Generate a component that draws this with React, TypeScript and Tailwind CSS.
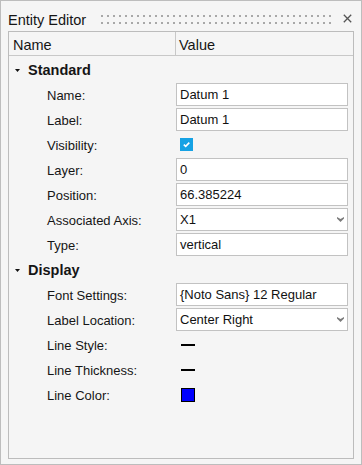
import React from "react";

type Row =
  | { kind: "section"; label: string }
  | { kind: "text"; label: string; value: string }
  | { kind: "select"; label: string; value: string }
  | { kind: "check"; label: string }
  | { kind: "line"; label: string }
  | { kind: "color"; label: string; color: string };

const ROWS: Row[] = [
  { kind: "section", label: "Standard" },
  { kind: "text", label: "Name:", value: "Datum 1" },
  { kind: "text", label: "Label:", value: "Datum 1" },
  { kind: "check", label: "Visibility:" },
  { kind: "text", label: "Layer:", value: "0" },
  { kind: "text", label: "Position:", value: "66.385224" },
  { kind: "select", label: "Associated Axis:", value: "X1" },
  { kind: "text", label: "Type:", value: "vertical" },
  { kind: "section", label: "Display" },
  { kind: "text", label: "Font Settings:", value: "{Noto Sans} 12 Regular" },
  { kind: "select", label: "Label Location:", value: "Center Right" },
  { kind: "line", label: "Line Style:" },
  { kind: "line", label: "Line Thickness:" },
  { kind: "color", label: "Line Color:", color: "#0000ff" },
];

function Grip() {
  // two rows of small dots used as a drag handle
  const cols = Array.from({ length: 39 });
  return (
    <div className="flex flex-col gap-[5px] mt-[3px] w-[234px]">
      {[0, 1].map((r) => (
        <div key={r} className="flex gap-[4px]">
          {cols.map((_, i) => (
            <span key={i} className="block w-[2px] h-[2px] bg-[#a8a8a8]" />
          ))}
        </div>
      ))}
    </div>
  );
}

function ValueCell({ row }: { row: Row }) {
  if (row.kind === "text") {
    return (
      <div className="w-[172px] h-[23px] border border-[#c2c2c2] bg-white flex items-center pl-[3px] text-[13px] leading-[15px] text-[#111]">
        {row.value}
      </div>
    );
  }
  if (row.kind === "select") {
    return (
      <div className="w-[172px] h-[23px] border border-[#c2c2c2] bg-white flex items-center justify-between pl-[3px] pr-[3px] text-[13px] leading-[15px] text-[#111]">
        <span>{row.value}</span>
        <svg width="7" height="5" viewBox="0 0 7 5" className="mt-[-1px]">
          <polygon points="0,0 3.5,2 7,0 7,1.6 3.5,5 0,1.6" fill="#7a7a7a" />
        </svg>
      </div>
    );
  }
  if (row.kind === "check") {
    return (
      <div className="ml-[4px] w-[13px] h-[13px] bg-[#16a2e4] flex items-center justify-center">
        <svg width="9" height="9" viewBox="0 0 9 9">
          <path d="M1.8 4.6 L3.7 6.4 L7.3 2.6" stroke="#fff" strokeWidth="1.6" fill="none" />
        </svg>
      </div>
    );
  }
  if (row.kind === "line") {
    return <div className="ml-[5px] w-[14px] h-[2px] bg-black" />;
  }
  if (row.kind === "color") {
    return <div className="ml-[5px] w-[14px] h-[14px] border border-black" style={{ backgroundColor: row.color }} />;
  }
  return null;
}

export default function App() {
  return (
    <div className="w-[362px] h-[465px] border border-[#bdbdbd] bg-[#f5f5f5] flex flex-col font-['Liberation_Sans',Arial,sans-serif] text-[#151515]">
      {/* Title bar */}
      <div className="h-[30px] flex items-start pt-[11px] pl-[7px] shrink-0">
        <div className="w-[93px] text-[14.5px] leading-[16px] whitespace-nowrap">Entity Editor</div>
        <Grip />
        <svg width="9" height="9" viewBox="0 0 9 9" className="ml-[8px] mt-[2px]">
          <path d="M0.8 0.8 L8.2 8.2 M8.2 0.8 L0.8 8.2" stroke="#555" strokeWidth="1.3" />
        </svg>
      </div>

      {/* Property table */}
      <div className="mx-[7px] h-[428px] border border-[#bcbcbc] flex flex-col shrink-0">
        <div className="h-[24px] border-b border-[#c8c8c8] flex text-[14.5px] leading-[16px]">
          <div className="w-[167px] border-r border-[#c8c8c8] pl-[4px] pt-[5px]">Name</div>
          <div className="pl-[3px] pt-[5px]">Value</div>
        </div>
        <div className="pt-[1px] flex flex-col">
          {ROWS.map((row, i) =>
            row.kind === "section" ? (
              <div key={i} className="h-[25px] flex items-center pl-[6px]">
                <svg width="5" height="3" viewBox="0 0 5 3" className="mr-[8px] mt-[1px]">
                  <polygon points="0,0 5,0 2.5,3" fill="#111" />
                </svg>
                <span className="text-[14.5px] leading-[16px] font-bold">{row.label}</span>
              </div>
            ) : (
              <div key={i} className="h-[25px] flex items-center">
                <div className="w-[167px] pl-[38px] text-[13px] leading-[15px] mt-[1px]">{row.label}</div>
                <ValueCell row={row} />
              </div>
            )
          )}
        </div>
      </div>
    </div>
  );
}
